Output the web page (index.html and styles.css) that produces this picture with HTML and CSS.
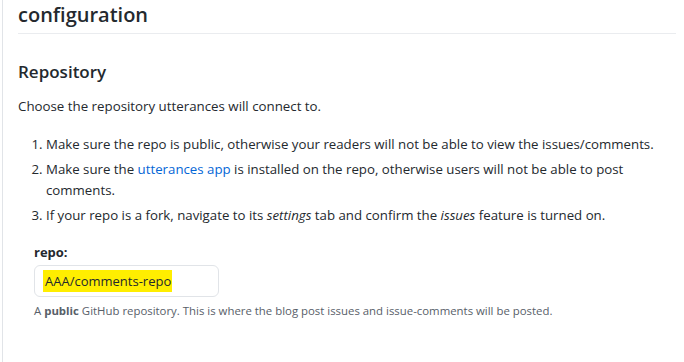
FILE: index.html
```html
<!DOCTYPE html>
<html lang="en">
<head>
  <meta charset="UTF-8">
  <title>utterances configuration</title>
  <link rel="stylesheet" href="styles.css">
</head>
<body>

<div class="page">
  <h1>configuration</h1>

  <h2>Repository</h2>
  <p>Choose the repository utterances will connect to.</p>
  <ol>
    <li>Make sure the repo is public, otherwise your readers will not be able to view the issues/comments.</li>
    <li>Make sure the <a href="#">utterances app</a> is installed on the repo, otherwise users will not be able to post comments.</li>
    <li>If your repo is a fork, navigate to its <em>settings</em> tab and confirm the <em>issues</em> feature is turned on.</li>
  </ol>

  <div class="form-group">
    <label for="repo">repo:</label>
    <div class="input"><span class="marked">AAA/comments-repo</span></div>
    <p class="note">A <strong>public</strong> GitHub repository. This is where the blog post issues and issue-comments will be posted.</p>
  </div>
</div>

</body>
</html>
```

FILE: styles.css
```css
body {
  font-family: "Open Sans", "Noto Sans", sans-serif;
  margin: 0;
  padding: 0;
  background-color: #fff;
  color: #24292e;
}

.page {
  margin-left: 2px;
  margin-right: 8px;
  min-height: 362px;
  border-left: 1px solid #e1e4e8;
  padding-left: 15px;
}

h1 {
  font-size: 20px;
  font-weight: 600;
  margin: 0;
  padding: 0 0 3px;
  line-height: 30px;
  border-bottom: 1px solid #eaecef;
}

h2 {
  font-size: 17px;
  font-weight: 600;
  margin: 26px 0 0;
  line-height: 24px;
}

p {
  font-size: 13.3px;
  margin: 13px 0 0;
}

ol {
  font-size: 13.25px;
  margin: 19px 0 0;
  padding-left: 28px;
}

ol li {
  line-height: 21px;
  margin-bottom: 4px;
}

a {
  color: #0366d6;
  text-decoration: none;
}

.form-group {
  margin-top: 17px;
  padding-left: 16px;
}

.form-group label {
  display: block;
  font-size: 13px;
  font-weight: 700;
  line-height: 18px;
}

.input {
  width: 175px;
  height: 30px;
  margin-top: 4px;
  border: 1px solid #e1e4e8;
  border-radius: 6px;
  display: flex;
  align-items: center;
  padding-left: 8px;
}

.marked {
  font-size: 13px;
  background-color: #ffee00;
  padding: 2px 1px 2px 2px;
}

.note {
  font-size: 11.4px;
  color: #586069;
  margin: 6px 0 0;
}
```
